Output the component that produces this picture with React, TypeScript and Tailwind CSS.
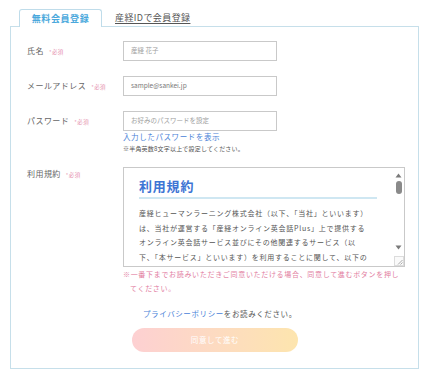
const termsLines = [
  "産経ヒューマンラーニング株式会社（以下、「当社」といいます）",
  "は、当社が運営する「産経オンライン英会話Plus」上で提供する",
  "オンライン英会話サービス並びにその他関連するサービス（以",
  "下、「本サービス」といいます）を利用することに関して、以下の",
  "とおり利用規約（以下、「本利用規約」といいます）を定めます。",
  "本利用規約は、本サービスを利用するすべての会員に適用されま",
  "す。会員は、本利用規約に同意したうえで本サービスを利用する",
];

function Required() {
  return <span className="ml-[5px] text-[5.5px] text-[#e58fae]">*必須</span>;
}

function Field({ label, top = "pt-[5px]", children }: { label: string; top?: string; children: React.ReactNode }) {
  return (
    <div className="flex">
      <div className={"w-[96px] shrink-0 text-[8px] leading-[10px] tracking-[0.45px] text-[#666] " + top}>
        {label}
        <Required />
      </div>
      <div className="flex-1">{children}</div>
    </div>
  );
}

function TextInput({ placeholder, dark }: { placeholder: string; dark?: boolean }) {
  return (
    <div
      className={
        "flex h-[20px] w-[154px] items-center border border-[#c9c9c9] px-[7px] text-[6.5px] " +
        (dark ? "text-[#777]" : "text-[#a0a0a0]")
      }
    >
      {placeholder}
    </div>
  );
}

export default function App() {
  return (
    <div
      className="h-[375px] w-[427px] bg-white px-[10px] pt-[9px]"
      style={{ fontFamily: '"Noto Sans CJK JP", "Noto Sans", sans-serif' }}
    >
      <div className="relative z-10 flex items-end">
        <div className="ml-[9px] -mb-px flex h-[18px] w-[83px] items-center justify-center rounded-t-[3px] border border-b-0 border-[#bfdcea] bg-white text-[9px] font-bold tracking-[0.6px] text-[#4aa8dc]">
          無料会員登録
        </div>
        <div className="ml-[13px] pb-[2px] text-[9px] tracking-[0.4px] text-[#555] underline underline-offset-2">
          産経IDで会員登録
        </div>
      </div>

      <div className="flex h-[343px] w-[409px] flex-col border border-[#c6dfea] pl-[16px] pt-[14px]">
        <div className="flex flex-col gap-[15px]">
          <Field label="氏名">
            <TextInput placeholder="産経 花子" />
          </Field>
          <Field label="メールアドレス">
            <TextInput placeholder="sample@sankei.jp" dark />
          </Field>
          <Field label="パスワード">
            <TextInput placeholder="お好みのパスワードを設定" />
            <div className="mt-[1px] text-[7.5px] leading-[10px] tracking-[0.6px] text-[#4a82d8]">
              入力したパスワードを表示
            </div>
            <div className="mt-[2px] text-[6px] leading-[10px] tracking-[0.2px] text-[#555]">
              ※半角英数8文字以上で設定してください。
            </div>
          </Field>
          <Field label="利用規約" top="pt-0">
            <div className="-mt-[2px] flex h-[100px] w-[282px] border border-[#c9c9c9]">
              <div className="flex-1 overflow-hidden pl-[15px] pr-[16px] pt-[9px]">
                <div className="border-b-2 border-[#cfe7f2] pb-[3px] text-[13px] font-bold leading-[17px] tracking-[0.8px] text-[#3d74d4]">
                  利用規約
                </div>
                <div className="mt-[7px] text-[7px] leading-[14.5px] tracking-[0.75px] text-[#555]">
                  {termsLines.map((line) => (
                    <div key={line} className="whitespace-nowrap">
                      {line}
                    </div>
                  ))}
                </div>
              </div>
              <div className="relative flex w-[11px] flex-col items-center">
                <svg width="7" height="5" viewBox="0 0 7 5" className="mt-[5px]">
                  <path d="M3.5 0.5 L6.5 4.5 L0.5 4.5 Z" fill="#7a7a7a" />
                </svg>
                <div className="mt-[3px] h-[13px] w-[6px] rounded-[3px] bg-[#8a8a8a]" />
                <svg width="7" height="5" viewBox="0 0 7 5" className="mt-[51px]">
                  <path d="M0.5 0.5 L6.5 0.5 L3.5 4.5 Z" fill="#7a7a7a" />
                </svg>
                <svg width="10" height="10" viewBox="0 0 10 10" className="absolute bottom-0 right-0">
                  <rect x="0.5" y="0.5" width="9" height="9" fill="#fafafa" stroke="#dcdcdc" />
                  <path d="M8.5 4 L4 8.5 M8.5 6.5 L6.5 8.5" stroke="#888" strokeWidth="0.7" />
                </svg>
              </div>
            </div>
          </Field>
        </div>

        <div className="ml-[96px] text-[7px] leading-[14px] tracking-[0.68px] text-[#e27e9f]">
          <div className="whitespace-nowrap">※一番下までお読みいただきご同意いただける場合、同意して進むボタンを押し</div>
          <div className="whitespace-nowrap pl-[7px]">てください。</div>
        </div>

        <p className="ml-[116px] mt-[14px] text-[7.5px] leading-[10px] tracking-[0.6px] text-[#555]">
          <span className="text-[#4a82d8]">プライバシーポリシー</span>をお読みください。
        </p>

        <div className="ml-[105px] mt-[9px] flex h-[24px] w-[166px] items-center justify-center rounded-full bg-gradient-to-r from-[#fdd0d2] to-[#fde5ae] text-[7.5px] tracking-[0.6px] text-white">
          同意して進む
        </div>
      </div>
    </div>
  );
}
